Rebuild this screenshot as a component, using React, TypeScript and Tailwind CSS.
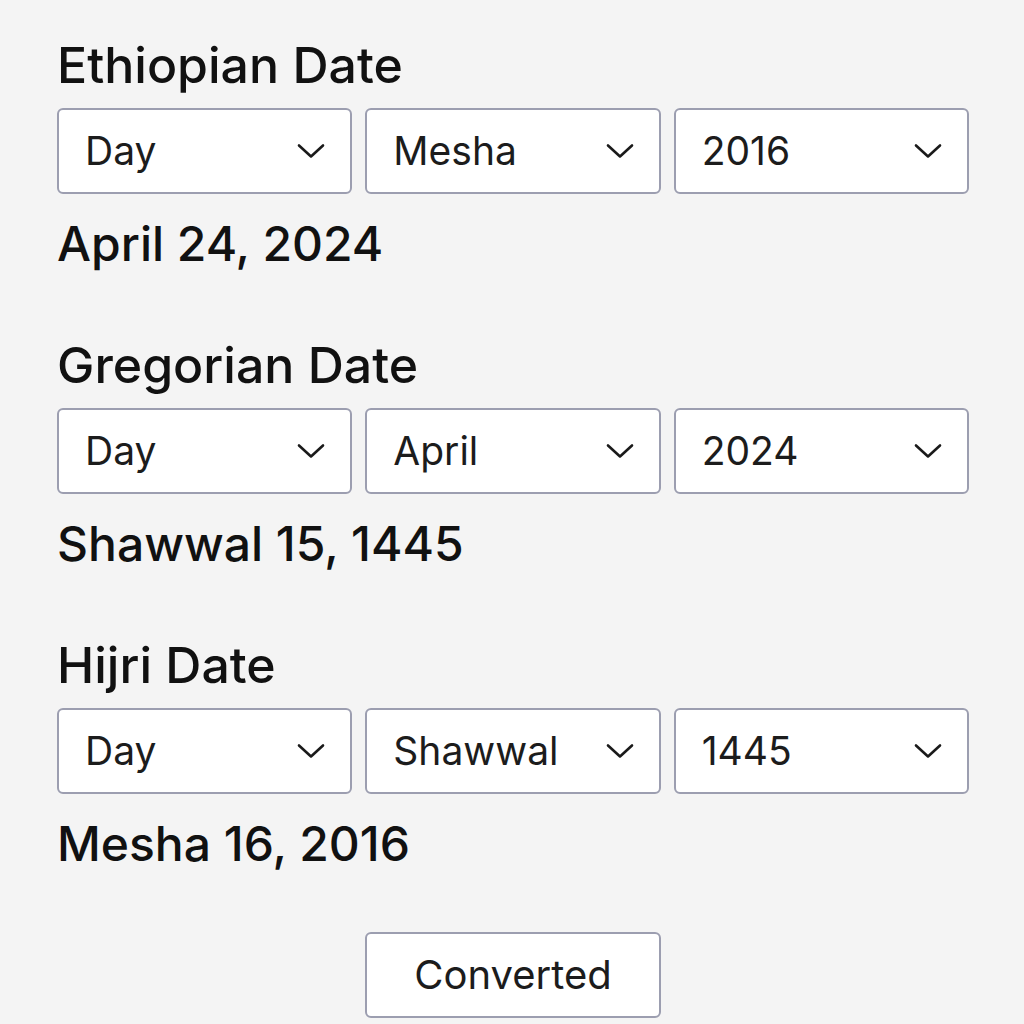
const Chevron = () => (
  <svg width="28" height="16" viewBox="0 0 28 16" fill="none" className="shrink-0">
    <path d="M2 2.5 L14 13.5 L26 2.5" stroke="#1a1a1a" strokeWidth="2.6" strokeLinecap="round" strokeLinejoin="round" />
  </svg>
);

const FakeSelect = ({ value }: { value: string }) => (
  <div className="flex h-[86px] items-center justify-between rounded-md border-2 border-[#9c9eb0] bg-white pl-[26px] pr-[25px]">
    <span className="text-[39px] text-[#1c1c1c]">{value}</span>
    <Chevron />
  </div>
);

const Section = ({
  title,
  selects,
  result,
}: {
  title: string;
  selects: string[];
  result: string;
}) => (
  <section className="flex flex-col">
    <h2 className="h-[70px] text-[50px] font-medium leading-[70px] text-[#111]">{title}</h2>
    <div className="mt-[8px] grid grid-cols-3 gap-[13px]">
      {selects.map((s, i) => (
        <FakeSelect key={i} value={s} />
      ))}
    </div>
    <p className="mt-[17px] text-[48px] font-medium leading-[66px] text-[#111]">{result}</p>
  </section>
);

export default function App() {
  return (
    <div
      className="min-h-[1024px] w-[1024px] bg-[#f4f4f4] pl-[57px] pr-[55px] pt-[30px]"
      style={{ fontFamily: "Inter, 'Noto Sans', sans-serif" }}
    >
      <div className="flex flex-col gap-[53px]">
        <Section title="Ethiopian Date" selects={["Day", "Mesha", "2016"]} result="April 24, 2024" />
        <Section title="Gregorian Date" selects={["Day", "April", "2024"]} result="Shawwal 15, 1445" />
        <Section title="Hijri Date" selects={["Day", "Shawwal", "1445"]} result="Mesha 16, 2016" />
      </div>
      <div className="mt-[55px] flex justify-center">
        <button className="h-[86px] w-[296px] rounded-md border-2 border-[#9c9eb0] bg-white text-[40px] text-[#1c1c1c]">
          Converted
        </button>
      </div>
    </div>
  );
}
